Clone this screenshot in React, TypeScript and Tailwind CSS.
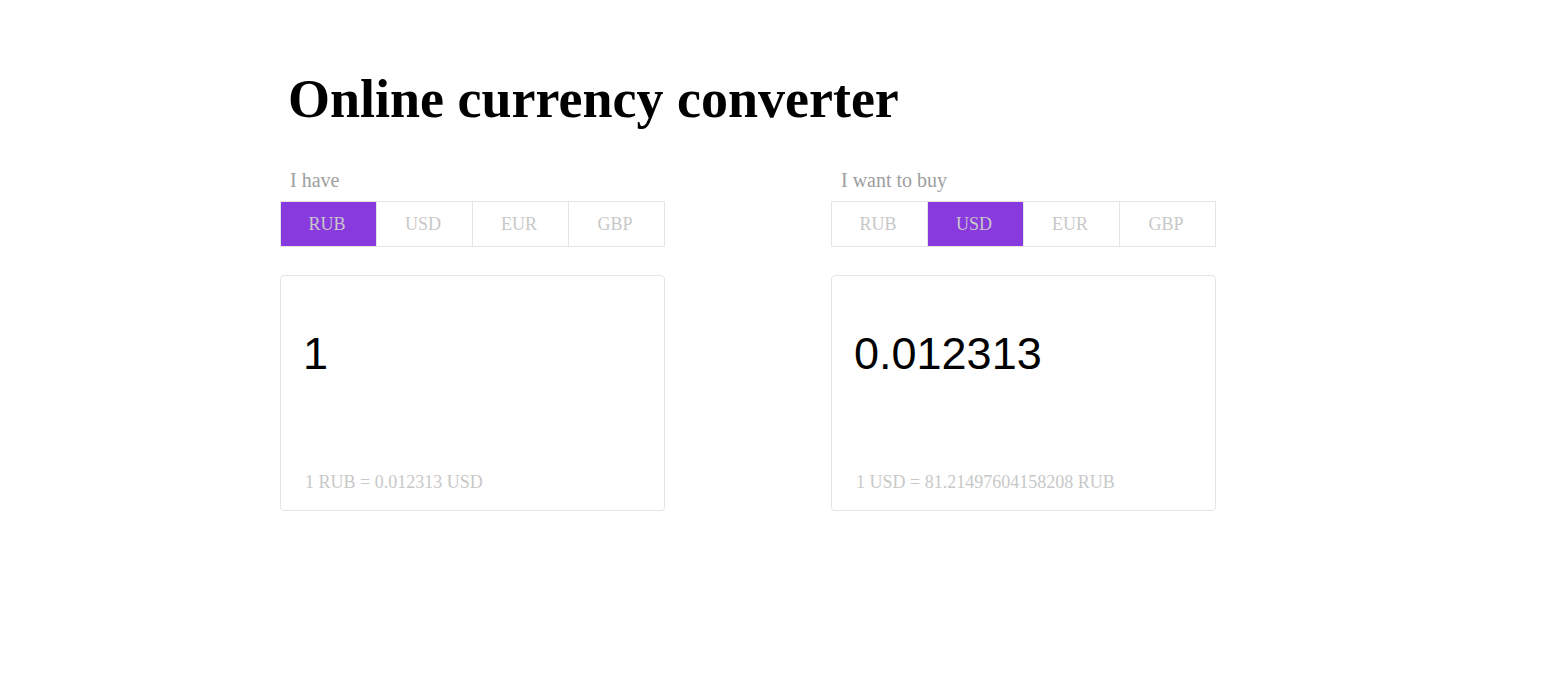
import { useState } from 'react'

const CURRENCIES = ['RUB', 'USD', 'EUR', 'GBP']

// rates against RUB
const RATES: Record<string, number> = {
  RUB: 1,
  USD: 0.012313,
  EUR: 0.011287,
  GBP: 0.009841,
}

interface SideProps {
  label: string
  active: string
  onPick: (c: string) => void
  value: string
  rate: string
  className?: string
}

function Side({ label, active, onPick, value, rate, className }: SideProps) {
  return (
    <div className={`w-[385px] ${className ?? ''}`}>
      <div className="pt-px pl-[10px] text-[20px] leading-[23px] text-[#9e9e9e] font-['Liberation_Serif',serif] h-[33px]">
        {label}
      </div>
      <div className="flex">
        {CURRENCIES.map((c, i) => (
          <button
            key={c}
            onClick={() => onPick(c)}
            className={`w-[97px] h-[46px] pr-[3px] border border-[#e5e5e5] text-[18px] font-['Liberation_Serif',serif] text-[#c8c8c8] ${
              i > 0 ? '-ml-px' : ''
            } ${c === active ? 'bg-[#883ade] border-[#883ade] relative z-10' : 'bg-white'}`}
          >
            {c}
          </button>
        ))}
      </div>
      <div className="mt-[28px] h-[236px] border border-[#e5e5e5] rounded-[4px] flex flex-col">
        <div className="pt-[52px] pl-[22px] text-[45px] leading-[52px] text-black font-['Liberation_Sans',Arial,sans-serif]">
          {value}
        </div>
        <div className="mt-auto pb-[17px] pl-[24px] text-[18px] leading-[21px] text-[#c8c8c8] font-['Liberation_Serif',serif]">
          {rate}
        </div>
      </div>
    </div>
  )
}

export default function App() {
  const [from, setFrom] = useState('RUB')
  const [to, setTo] = useState('USD')
  const amount = 1

  const fwd = RATES[to] / RATES[from]
  const back = from === 'RUB' && to === 'USD' ? '81.21497604158208' : String(RATES[from] / RATES[to])

  return (
    <div className="min-h-screen bg-white">
      <div className="w-[1000px] mx-auto pt-[68px]">
        <h1 className="ml-[8px] text-[54px] leading-[62px] font-bold text-black font-['Liberation_Serif',serif]">
          Online currency converter
        </h1>
        <div className="flex mt-[38px]">
          <Side
            label="I have"
            active={from}
            onPick={setFrom}
            value={String(amount)}
            rate={`1 ${from} = ${+fwd.toFixed(6)} ${to}`}
          />
          <Side
            label="I want to buy"
            active={to}
            onPick={setTo}
            value={String(+(amount * fwd).toFixed(6))}
            rate={`1 ${to} = ${back} ${from}`}
            className="ml-[166px]"
          />
        </div>
      </div>
    </div>
  )
}
